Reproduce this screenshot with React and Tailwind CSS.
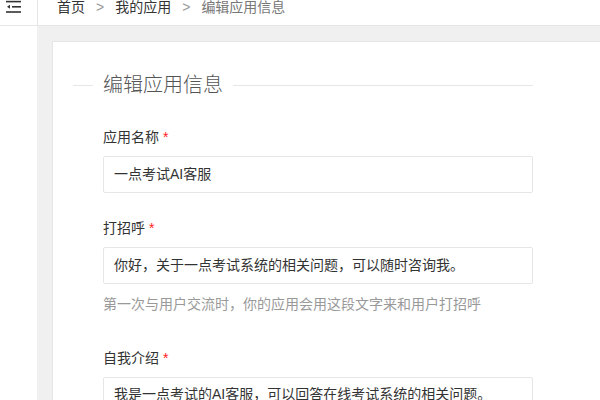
export default function App() {
  const font = { fontFamily: '"Liberation Sans", "Noto Sans CJK SC", sans-serif' };
  return (
    <div className="w-[600px] h-[400px] overflow-hidden bg-white text-[#333]" style={font}>
      {/* top header */}
      <div className="flex h-[26px] border-b border-[#e6e6e6] bg-white">
        <div className="w-[38px] shrink-0 border-r border-[#e6e6e6] relative">
          <svg className="absolute left-[6px] top-0" width="16" height="14" viewBox="0 0 16 14">
            <rect x="0" y="0.8" width="15" height="1.6" fill="#333" />
            <polygon points="1,6.8 4,4.8 4,8.8" fill="#333" />
            <rect x="6" y="6" width="9" height="1.6" fill="#333" />
            <rect x="0" y="11.2" width="15" height="1.6" fill="#333" />
          </svg>
        </div>
        <div className="flex items-start pl-[19px] text-[14px] leading-[14px]">
          <span className="text-[#333]">首页</span>
          <span className="mx-[11px] text-[#999]">&gt;</span>
          <span className="text-[#333]">我的应用</span>
          <span className="mx-[11px] text-[#999]">&gt;</span>
          <span className="text-[#777]">编辑应用信息</span>
        </div>
      </div>
      {/* body */}
      <div className="flex h-[374px]">
        <div className="w-[37px] shrink-0 bg-white" />
        <div className="flex-1 bg-[#f0f0f0] pl-[15px] pt-[15px] overflow-hidden">
          <div className="w-[600px] h-[500px] bg-white border border-[#e6e6e6] pl-[20px] pt-[29px]">
            <div className="flex items-center w-[460px] h-[28px]">
              <div className="w-[20px] h-px bg-[#e6e6e6]" />
              <div className="px-[10px] text-[20px] leading-[28px] font-light text-[#555]">编辑应用信息</div>
              <div className="flex-1 h-px bg-[#e6e6e6]" />
            </div>
            <div className="ml-[30px] w-[430px] pt-[28px] text-[14px]">
              <div className="h-[20px] leading-[20px] text-[#333]">
                应用名称 <span className="text-[#ff1a1a]">*</span>
              </div>
              <div className="mt-[9px] h-[37px] border border-[#e6e6e6] rounded-[2px] pl-[10px] flex items-center text-[#333]">
                一点考试AI客服
              </div>
              <div className="mt-[25px] h-[20px] leading-[20px] text-[#333]">
                打招呼 <span className="text-[#ff1a1a]">*</span>
              </div>
              <div className="mt-[9px] h-[37px] border border-[#e6e6e6] rounded-[2px] pl-[10px] flex items-center text-[#333]">
                你好，关于一点考试系统的相关问题，可以随时咨询我。
              </div>
              <div className="mt-[10px] h-[20px] leading-[20px] text-[#999]">
                第一次与用户交流时，你的应用会用这段文字来和用户打招呼
              </div>
              <div className="mt-[34px] h-[20px] leading-[20px] text-[#333]">
                自我介绍 <span className="text-[#ff1a1a]">*</span>
              </div>
              <div className="mt-[9px] h-[60px] border border-[#e6e6e6] rounded-[2px] pl-[10px] pt-[6px] leading-[20px] text-[#333]">
                我是一点考试的AI客服，可以回答在线考试系统的相关问题。
              </div>
            </div>
          </div>
        </div>
      </div>
    </div>
  );
}
